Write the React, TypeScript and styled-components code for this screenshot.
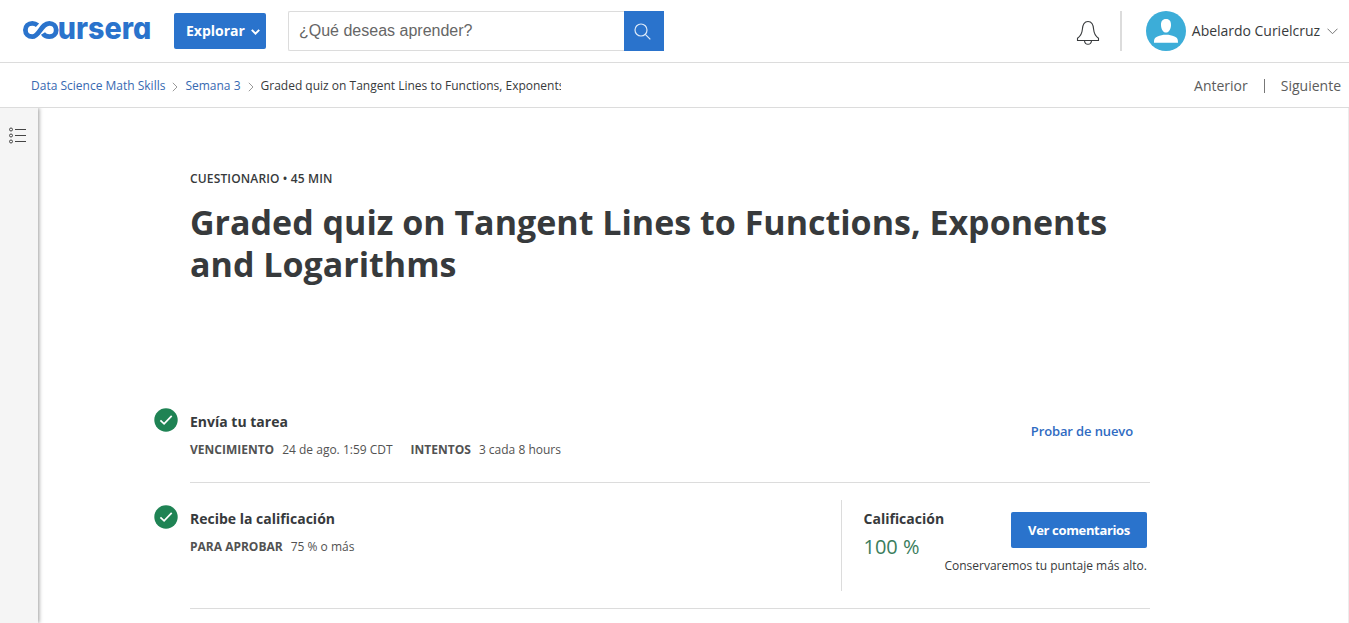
import React from 'react';
import styled, { createGlobalStyle } from 'styled-components';

const GlobalStyle = createGlobalStyle`
  * { box-sizing: border-box; }
  body {
    margin: 0;
    background: #fff;
    color: #373a3c;
    font-family: 'Open Sans', sans-serif;
    overflow: hidden;
  }
  button, input { font-family: inherit; }
`;

const Page = styled.div`
  height: 623px;
  display: flex;
  flex-direction: column;
  overflow: hidden;
`;

const Header = styled.header`
  flex: none;
  height: 63px;
  display: flex;
  align-items: center;
  padding: 0 11px 1px 22px;
  border-bottom: 1px solid #dcdcdc;
`;

const Logo = styled.svg`
  display: block;
  width: 130px;
  height: 40px;
  margin: 0 22px 0 0;
`;

const ExploreButton = styled.button`
  display: flex;
  align-items: center;
  gap: 6px;
  width: 92px;
  height: 36px;
  padding: 0 0 0 12px;
  border: 0;
  border-radius: 2px;
  background: #2a73cc;
  color: #fff;
  font-size: 14px;
  font-weight: 700;
  svg { margin-top: 2px; }
`;

const Search = styled.form`
  display: flex;
  width: 376px;
  height: 40px;
  margin-left: 22px;
`;

const SearchInput = styled.input`
  flex: 1;
  min-width: 0;
  padding: 0 10px;
  border: 1px solid #dcdcdc;
  border-right: 0;
  border-radius: 2px 0 0 2px;
  font-family: 'Liberation Sans', sans-serif;
  font-size: 16px;
  &::placeholder { color: #666; opacity: 1; }
`;

const SearchButton = styled.button`
  display: flex;
  align-items: center;
  justify-content: center;
  width: 40px;
  padding: 1px 3px 0 0;
  border: 0;
  background: #2a73cc;
`;

const Account = styled.div`
  display: flex;
  align-items: center;
  margin-left: auto;
`;

const Bell = styled.svg`
  display: block;
  margin-top: 4px;
`;

const AccountRule = styled.div`
  width: 2px;
  height: 40px;
  margin: 0 24px 0 20px;
  background: #dcdcdc;
`;

const UserName = styled.span`
  margin: 0 7px 0 6px;
  font-size: 14px;
  line-height: 20px;
  letter-spacing: -0.02px;
  white-space: nowrap;
`;

const MenuArrow = styled.svg`
  display: block;
  margin-top: 2px;
`;

const SubHeader = styled.nav`
  flex: none;
  height: 45px;
  display: flex;
  align-items: center;
  justify-content: space-between;
  padding: 2px 8px 0 31px;
  border-bottom: 1px solid #dcdcdc;
`;

const Crumbs = styled.div`
  display: flex;
  align-items: center;
  font-size: 12px;
  line-height: 18px;
  white-space: nowrap;
  svg { margin: 1px 7px 0 7px; }
`;

const CrumbLink = styled.a`
  color: #3769b1;
`;

const CrumbCurrent = styled.span`
  width: 300px;
  margin-right: 1px;
  overflow: hidden;
`;

const Pager = styled.div`
  display: flex;
  align-items: center;
  color: #5c5c5c;
  font-size: 14px;
  line-height: 20px;
`;

const PagerRule = styled.div`
  width: 1px;
  height: 14px;
  margin: 0 16px;
  background: #777;
`;

const Body = styled.div`
  flex: 1;
  min-height: 0;
  display: flex;
`;

const Rail = styled.aside`
  flex: none;
  width: 38px;
  padding: 19px 0 0 9px;
  background: #f5f5f5;
  box-shadow: 1px 0 4px rgba(0, 0, 0, 0.4);
  clip-path: inset(0 -8px 0 0);
`;

const Main = styled.main`
  flex: 1;
  padding: 62px 0 0 116px;
  border-right: 1px solid #ececec;
`;

const Kicker = styled.div`
  margin-left: 36px;
  font-size: 12px;
  font-weight: 600;
  letter-spacing: 0.15px;
  line-height: 18px;
`;

const Title = styled.h1`
  width: 960px;
  height: 84px;
  margin: 13px 0 101px 36px;
  font-size: 34px;
  font-weight: 700;
  line-height: 42px;
`;

const Step = styled.section<{ $height: number }>`
  display: flex;
  width: 996px;
  height: ${(p) => p.$height}px;
`;

const StepIcon = styled.div`
  width: 36px;
  padding-top: 22px;
`;

const StepContent = styled.div`
  flex: 1;
  display: flex;
  justify-content: space-between;
  padding-top: 26px;
  border-bottom: 1px solid #dcdcdc;
`;

const StepTitle = styled.h2`
  margin: 0;
  font-size: 14px;
  font-weight: 700;
  line-height: 20px;
`;

const Details = styled.div`
  display: flex;
  gap: 18px;
  margin-top: 9px;
  color: #525252;
  font-size: 12px;
  line-height: 18px;
  white-space: nowrap;
`;

const Label = styled.b`
  margin-right: 8px;
  font-weight: 700;
`;

const RetryLink = styled.a`
  margin: 9px 17px 0 0;
  color: #2f6bc2;
  font-size: 13px;
  font-weight: 600;
  letter-spacing: -0.12px;
  line-height: 20px;
`;

const GradePanel = styled.div`
  display: flex;
  justify-content: space-between;
  width: 309px;
  height: 91px;
  margin-top: -9px;
  padding: 9px 3px 0 21.5px;
  border-left: 1px solid #dcdcdc;
`;

const Score = styled.div`
  margin-top: 4px;
  color: #3a7d5c;
  font-size: 20px;
  line-height: 27px;
  white-space: nowrap;
`;

const Feedback = styled.div`
  display: flex;
  flex-direction: column;
  align-items: flex-end;
  width: 0;
  margin-top: 3px;
`;

const FeedbackButton = styled.button`
  flex: none;
  width: 136px;
  height: 36px;
  padding: 0;
  border: 0;
  border-radius: 2px;
  background: #2a73cc;
  color: #fff;
  font-size: 13px;
  font-weight: 700;
  letter-spacing: -0.35px;
`;

const Note = styled.div`
  margin-top: 9px;
  font-size: 12px;
  line-height: 18px;
  white-space: nowrap;
`;

function Chevron() {
  return (
    <svg width="6" height="10" viewBox="0 0 6 10" fill="none" stroke="#9a9a9a">
      <path d="M.8.8 5 5 .8 9.2" />
    </svg>
  );
}

function CheckBadge() {
  return (
    <svg width="24" height="24" viewBox="0 0 24 24">
      <circle cx="12" cy="12" r="11.7" fill="#1f8354" />
      <path d="m6.4 12.3 3.7 3.6 7.6-8" fill="none" stroke="#fff" strokeWidth="1.7" />
    </svg>
  );
}

export default function App() {
  return (
    <Page>
      <GlobalStyle />
      <Header>
        <Logo viewBox="0 0 130 40" aria-label="coursera">
          <path
            d="M15.500 14.300C14 12.900 12.300 12.300 10.300 12.300 6.300 12.300 3.400 15.300 3.400 19S6.300 25.700 10.300 25.700C17.500 25.700 19 12.300 27.300 12.300 31.300 12.300 34.200 15.300 34.200 19S31.300 25.700 27.300 25.700C24.500 25.700 22.300 24.500 21 22.500"
            fill="none"
            stroke="#2a73cc"
            strokeWidth="4.800"
          />
          <text
            x="35.800"
            y="27.500"
            textLength="93.500"
            lengthAdjust="spacingAndGlyphs"
            fill="#2a73cc"
            fontFamily="Inter, sans-serif"
            fontSize="30"
            fontWeight="800"
            style={{ fontFeatureSettings: '"cv11"' }}
          >
            ursera
          </text>
        </Logo>
        <ExploreButton>
          Explorar
          <svg width="9" height="6" viewBox="0 0 9 6" fill="none" stroke="#fff" strokeWidth="2">
            <path d="m.8.9 3.700 3.700L8.200.9" />
          </svg>
        </ExploreButton>
        <Search>
          <SearchInput placeholder="¿Qué deseas aprender?" />
          <SearchButton type="button" aria-label="Buscar">
            <svg width="17" height="17" viewBox="0 0 17 17" fill="none" stroke="#dce9f8" strokeWidth="1.2">
              <circle cx="7" cy="7" r="6" />
              <path d="m11.300 11.300 5 5" />
            </svg>
          </SearchButton>
        </Search>
        <Account>
          <Bell width="24" height="26" viewBox="0 0 24 26" fill="none" stroke="#373a3c" strokeWidth="1.100">
            <path d="M1.500 20.500v-2.300c3.300-2.300 4.500-4.400 4.800-8.400.3-5.500 1.900-8.300 5.700-8.300s5.400 2.800 5.700 8.300c.3 4 1.500 6.100 4.800 8.400v2.300z" />
            <path d="M8.500 20.700c.2 2.300 1.500 3.600 3.500 3.600s3.300-1.300 3.500-3.600" />
          </Bell>
          <AccountRule />
          <svg width="40" height="40" viewBox="0 0 40 40">
            <circle cx="20" cy="20" r="20" fill="#3cadd8" />
            <path d="M20 8c3.600 0 5.200 2.500 5 6.200-.2 3.800-2 7.300-5 7.300s-4.800-3.500-5-7.300C14.800 10.500 16.400 8 20 8z" fill="#fff" />
            <path d="M8 31.700c0-3.500.6-5.300 3.500-6.300 3-1 5-1.700 8.500-1.700s5.500.7 8.500 1.700c2.900 1 3.500 2.800 3.500 6.300z" fill="#fff" />
          </svg>
          <UserName>Abelardo Curielcruz</UserName>
          <MenuArrow width="11" height="7" viewBox="0 0 11 7" fill="none" stroke="#777">
            <path d="m.5.700 5 5 5-5" />
          </MenuArrow>
        </Account>
      </Header>
      <SubHeader>
        <Crumbs>
          <CrumbLink>Data Science Math Skills</CrumbLink>
          <Chevron />
          <CrumbLink>Semana 3</CrumbLink>
          <Chevron />
          <CrumbCurrent>Graded quiz on Tangent Lines to Functions, Exponents</CrumbCurrent>
        </Crumbs>
        <Pager>
          <span>Anterior</span>
          <PagerRule />
          <span>Siguiente</span>
        </Pager>
      </SubHeader>
      <Body>
        <Rail>
          <svg width="18" height="18" viewBox="0 0 18 18" fill="none" stroke="#444">
            <circle cx="2" cy="2.500" r="1.500" />
            <circle cx="2" cy="8.500" r="1.500" />
            <circle cx="2" cy="14.500" r="1.500" />
            <path d="M6 2.500h11M6 8.500h11M6 14.500h11" />
          </svg>
        </Rail>
        <Main>
          <Kicker>CUESTIONARIO • 45 MIN</Kicker>
          <Title>Graded quiz on Tangent Lines to Functions, Exponents and Logarithms</Title>
          <Step $height={97}>
            <StepIcon>
              <CheckBadge />
            </StepIcon>
            <StepContent>
              <div>
                <StepTitle>Envía tu tarea</StepTitle>
                <Details>
                  <span><Label>VENCIMIENTO</Label>24 de ago. 1:59 CDT</span>
                  <span><Label>INTENTOS</Label>3 cada 8 hours</span>
                </Details>
              </div>
              <RetryLink>Probar de nuevo</RetryLink>
            </StepContent>
          </Step>
          <Step $height={126}>
            <StepIcon>
              <CheckBadge />
            </StepIcon>
            <StepContent>
              <div>
                <StepTitle>Recibe la calificación</StepTitle>
                <Details>
                  <span><Label>PARA APROBAR</Label>75 % o más</span>
                </Details>
              </div>
              <GradePanel>
                <div>
                  <StepTitle>Calificación</StepTitle>
                  <Score>100 %</Score>
                </div>
                <Feedback>
                  <FeedbackButton>Ver comentarios</FeedbackButton>
                  <Note>Conservaremos tu puntaje más alto.</Note>
                </Feedback>
              </GradePanel>
            </StepContent>
          </Step>
        </Main>
      </Body>
    </Page>
  );
}
